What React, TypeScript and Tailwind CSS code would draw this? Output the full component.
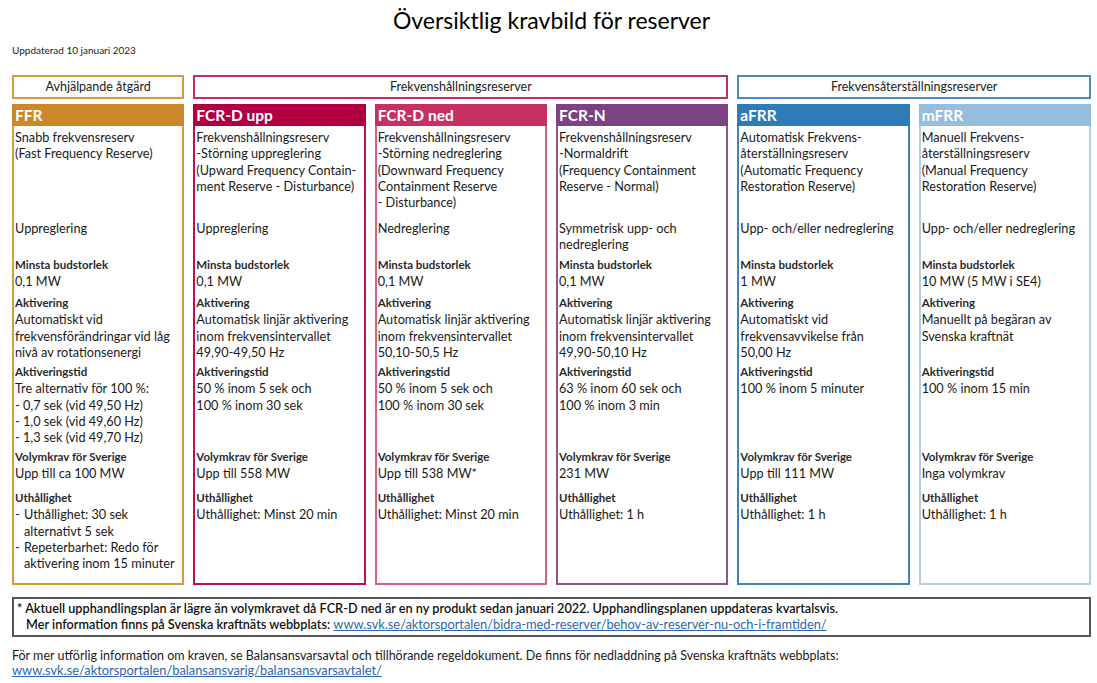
import React from 'react';

type Col = {
  name: string;
  band: string;
  border: string;
  desc: string[];
  dir: string[];
  min: string;
  akt: string[];
  tid: string[];
  vol: string;
  uth: string[][];
};

const COLS: Col[] = [
  {
    name: 'FFR',
    band: 'bg-[#cb8828]',
    border: 'border-[#d99a3e]',
    desc: ['Snabb frekvensreserv', '(Fast Frequency Reserve)'],
    dir: ['Uppreglering'],
    min: '0,1 MW',
    akt: ['Automatiskt vid', 'frekvensförändringar vid låg', 'nivå av rotationsenergi'],
    tid: ['Tre alternativ för 100 %:', '- 0,7 sek (vid 49,50 Hz)', '- 1,0 sek (vid 49,60 Hz)', '- 1,3 sek (vid 49,70 Hz)'],
    vol: 'Upp till ca 100 MW',
    uth: [
      ['Uthållighet: 30 sek', 'alternativt 5 sek'],
      ['Repeterbarhet: Redo för', 'aktivering inom 15 minuter'],
    ],
  },
  {
    name: 'FCR-D upp',
    band: 'bg-[#b00042]',
    border: 'border-[#b9134f]',
    desc: ['Frekvenshållningsreserv', '-Störning uppreglering', '(Upward Frequency Contain-', 'ment Reserve - Disturbance)'],
    dir: ['Uppreglering'],
    min: '0,1 MW',
    akt: ['Automatisk linjär aktivering', 'inom frekvensintervallet', '49,90-49,50 Hz'],
    tid: ['50 % inom 5 sek och', '100 % inom 30 sek'],
    vol: 'Upp till 558 MW',
    uth: [['Uthållighet: Minst 20 min']],
  },
  {
    name: 'FCR-D ned',
    band: 'bg-[#c53262]',
    border: 'border-[#d46288]',
    desc: ['Frekvenshållningsreserv', '-Störning nedreglering', '(Downward Frequency', 'Containment Reserve', '- Disturbance)'],
    dir: ['Nedreglering'],
    min: '0,1 MW',
    akt: ['Automatisk linjär aktivering', 'inom frekvensintervallet', '50,10-50,5 Hz'],
    tid: ['50 % inom 5 sek och', '100 % inom 30 sek'],
    vol: 'Upp till 538 MW*',
    uth: [['Uthållighet: Minst 20 min']],
  },
  {
    name: 'FCR-N',
    band: 'bg-[#7b4383]',
    border: 'border-[#8a5592]',
    desc: ['Frekvenshållningsreserv', '-Normaldrift', '(Frequency Containment', 'Reserve - Normal)'],
    dir: ['Symmetrisk upp- och', 'nedreglering'],
    min: '0,1 MW',
    akt: ['Automatisk linjär aktivering', 'inom frekvensintervallet', '49,90-50,10 Hz'],
    tid: ['63 % inom 60 sek och', '100 % inom 3 min'],
    vol: '231 MW',
    uth: [['Uthållighet: 1 h']],
  },
  {
    name: 'aFRR',
    band: 'bg-[#2d7cb6]',
    border: 'border-[#3d84bb]',
    desc: ['Automatisk Frekvens-', 'återställningsreserv', '(Automatic Frequency', 'Restoration Reserve)'],
    dir: ['Upp- och/eller nedreglering'],
    min: '1 MW',
    akt: ['Automatiskt vid', 'frekvensavvikelse från', '50,00 Hz'],
    tid: ['100 % inom 5 minuter'],
    vol: 'Upp till 111 MW',
    uth: [['Uthållighet: 1 h']],
  },
  {
    name: 'mFRR',
    band: 'bg-[#97bddc]',
    border: 'border-[#b3cfe6]',
    desc: ['Manuell Frekvens-', 'återställningsreserv', '(Manual Frequency', 'Restoration Reserve)'],
    dir: ['Upp- och/eller nedreglering'],
    min: '10 MW (5 MW i SE4)',
    akt: ['Manuellt på begäran av', 'Svenska kraftnät'],
    tid: ['100 % inom 15 min'],
    vol: 'Inga volymkrav',
    uth: [['Uthållighet: 1 h']],
  },
];

function Lines({ lines }: { lines: string[] }) {
  return (
    <>
      {lines.map((l) => (
        <div key={l} className="whitespace-nowrap">{l}</div>
      ))}
    </>
  );
}

function Label({ children }: { children: React.ReactNode }) {
  return <div className="text-[11.5px] font-bold text-[#2a2a2a] whitespace-nowrap">{children}</div>;
}

function Column({ c }: { c: Col }) {
  return (
    <div className="flex flex-col h-[481px]">
      <div className={`${c.band} h-[22px] shrink-0 px-[3px] text-white font-bold text-[15.5px] leading-[22px]`}>
        {c.name}
      </div>
      <div className={`flex-1 border-2 border-t-0 ${c.border} px-[1px] text-[12.7px] leading-[16.3px]`}>
        <div className="h-[94px] pt-[3px]">
          <Lines lines={c.desc} />
        </div>
        <div className="h-[37px]">
          <Lines lines={c.dir} />
        </div>
        <div className="h-[37px]">
          <Label>Minsta budstorlek</Label>
          <div>{c.min}</div>
        </div>
        <div className="h-[70px] pt-[1px]">
          <Label>Aktivering</Label>
          <Lines lines={c.akt} />
        </div>
        <div className="h-[85px]">
          <Label>Aktiveringstid</Label>
          <Lines lines={c.tid} />
        </div>
        <div className="h-[41px]">
          <Label>Volymkrav för Sverige</Label>
          <div>{c.vol}</div>
        </div>
        <div>
          <Label>Uthållighet</Label>
          {c.uth.length > 1
            ? c.uth.map((item) => (
                <div key={item[0]} className="flex">
                  <span className="w-[9px] shrink-0">-</span>
                  <div>
                    <Lines lines={item} />
                  </div>
                </div>
              ))
            : <Lines lines={c.uth[0]} />}
        </div>
      </div>
    </div>
  );
}

export default function App() {
  return (
    <div className="w-[1097px] h-[683px] bg-white pl-[12px] pr-[6px] font-['Lato','Open_Sans',sans-serif] text-[#1a1a1a]">
      <h1 className="pt-[6px] text-center text-[23px] leading-[28px] text-black">
        Översiktlig kravbild för reserver
      </h1>
      <div className="mt-[9px] text-[10px] leading-[14px]">Uppdaterad 10 januari 2023</div>

      <div className="mt-[18px] grid grid-cols-6 gap-x-[9px] text-[12.5px] text-[#222]">
        <div className="h-[24px] border-2 border-[#d99a3e] flex items-center justify-center">Avhjälpande åtgärd</div>
        <div className="col-span-3 h-[24px] border-2 border-[#c0325e] flex items-center justify-center">
          Frekvenshållningsreserver
        </div>
        <div className="col-span-2 h-[24px] border-2 border-[#4a8cc2] flex items-center justify-center">
          Frekvensåterställningsreserver
        </div>
      </div>

      <div className="mt-[5px] grid grid-cols-6 gap-x-[9px]">
        {COLS.map((c) => (
          <Column key={c.name} c={c} />
        ))}
      </div>

      <div className="mt-[12px] h-[40px] border-2 border-[#555] px-[3px] pt-[1px] text-[12.7px] leading-[16px] font-semibold text-[#111]">
        <div>* Aktuell upphandlingsplan är lägre än volymkravet då FCR-D ned är en ny produkt sedan januari 2022. Upphandlingsplanen uppdateras kvartalsvis.</div>
        <div className="pl-[9px]">
          Mer information finns på Svenska kraftnäts webbplats:{' '}
          <a href="#" className="font-normal text-[12.8px] text-[#2b66b1] underline">
            www.svk.se/aktorsportalen/bidra-med-reserver/behov-av-reserver-nu-och-i-framtiden/
          </a>
        </div>
      </div>

      <div className="mt-[11px] text-[12.5px] leading-[15px]">
        <div>
          För mer utförlig information om kraven, se Balansansvarsavtal och tillhörande regeldokument. De finns för nedladdning på Svenska kraftnäts webbplats:
        </div>
        <a href="#" className="text-[12.85px] text-[#2b66b1] underline">
          www.svk.se/aktorsportalen/balansansvarig/balansansvarsavtalet/
        </a>
      </div>
    </div>
  );
}
